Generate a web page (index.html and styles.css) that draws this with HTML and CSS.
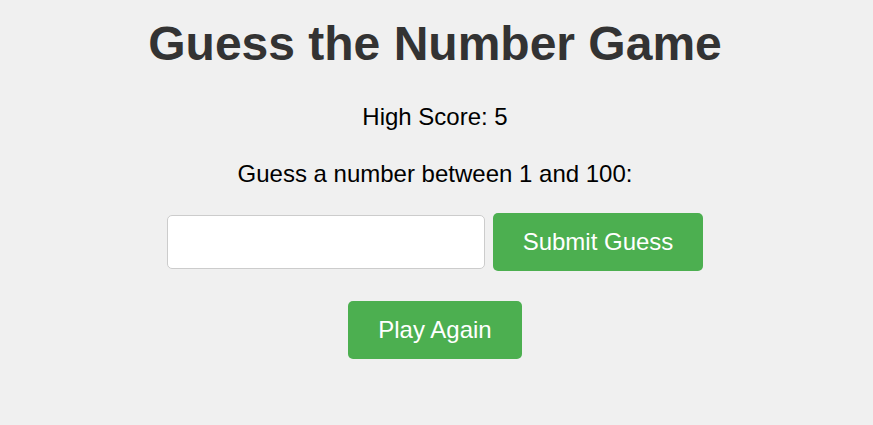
FILE: index.html
```html
<!DOCTYPE html>
<html lang="en">
<head>
<meta charset="utf-8">
<title>Guess the Number Game</title>
<link rel="stylesheet" href="styles.css">
</head>
<body>
<main class="game">
  <h1 class="title">Guess the Number Game</h1>
  <p class="score">High Score: 5</p>
  <p class="prompt">Guess a number between 1 and 100:</p>
  <div class="guess-row">
    <input class="guess-input" type="number" aria-label="Your guess">
    <button class="btn" type="button">Submit Guess</button>
  </div>
  <button class="btn btn-again" type="button">Play Again</button>
</main>
</body>
</html>
```
FILE: styles.css
```css
html, body {
  margin: 0;
  padding: 0;
  background: #f0f0f0;
}

body {
  font-family: "Liberation Sans", Arial, sans-serif;
  color: #000;
}

.game {
  display: flex;
  flex-direction: column;
  align-items: center;
  padding-top: 16px;
  padding-right: 3px;
  text-align: center;
}

.title {
  margin: 0;
  font-size: 48px;
  font-weight: bold;
  color: #333;
  line-height: 55px;
}

.score,
.prompt {
  margin: 0;
  font-size: 24px;
  line-height: 28px;
}

.score {
  margin-top: 32px;
}

.prompt {
  margin-top: 29px;
}

.guess-row {
  display: flex;
  align-items: center;
  gap: 8px;
  margin-top: 25px;
}

.guess-input {
  box-sizing: border-box;
  width: 318px;
  height: 54px;
  padding: 10px;
  font-family: inherit;
  font-size: 24px;
  border: 1px solid #ccc;
  border-radius: 5px;
  background: #fff;
  -moz-appearance: textfield;
}

.guess-input::-webkit-outer-spin-button,
.guess-input::-webkit-inner-spin-button {
  -webkit-appearance: none;
  margin: 0;
}

.btn {
  box-sizing: border-box;
  height: 58px;
  padding: 0 30px;
  font-family: inherit;
  font-size: 24px;
  color: #fff;
  background: #4caf50;
  border: none;
  border-radius: 5px;
  cursor: pointer;
}

.btn-again {
  margin-top: 30px;
}
```
